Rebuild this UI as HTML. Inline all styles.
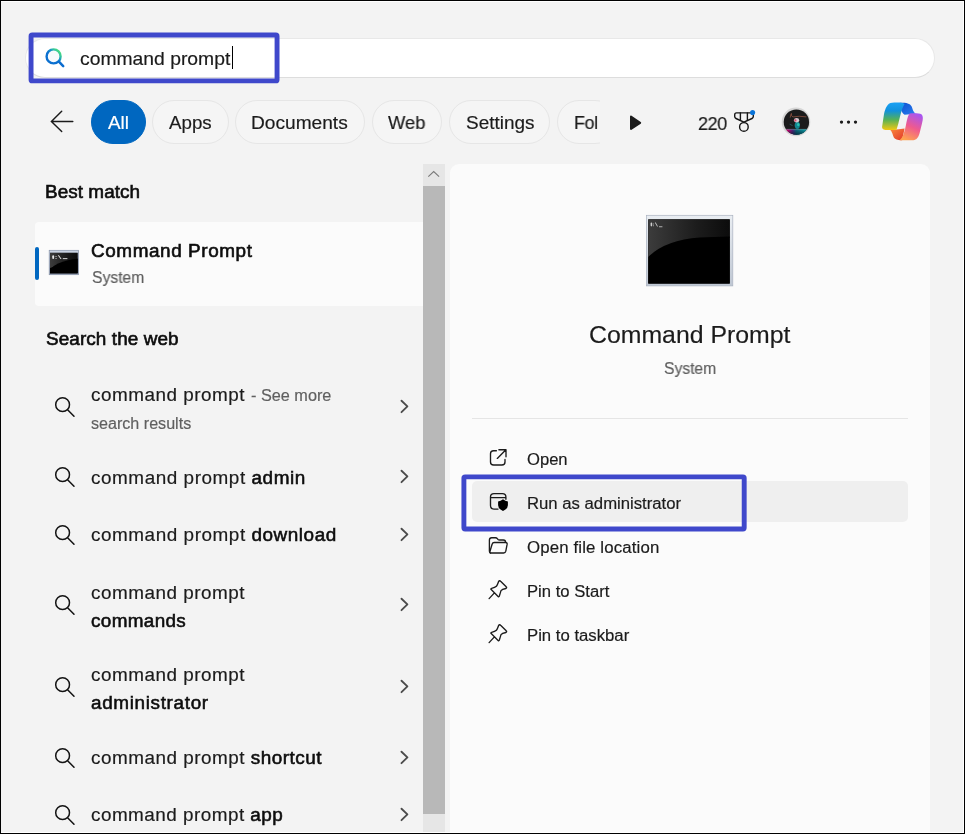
<!DOCTYPE html>
<html>
<head>
<meta charset="utf-8">
<title>Search</title>
<style>
*{box-sizing:border-box;margin:0;padding:0}
html,body{width:965px;height:834px;overflow:hidden;background:#f3f3f3}
body{font-family:"Liberation Sans",sans-serif;color:#1b1b1b;position:relative}
.abs{position:absolute}
svg{position:absolute;overflow:visible}
.t{position:absolute;white-space:nowrap;line-height:1;transform-origin:0 0;will-change:transform;-webkit-text-stroke:0.18px currentColor}
.t b{font-weight:normal;-webkit-text-stroke:0.55px currentColor;color:#0d0d0d}
#frame{left:0;top:0;width:965px;height:834px;border:1px solid #000;z-index:50}
#frame2{left:1px;top:1px;width:963px;height:832px;border-top:1px solid #fff;border-right:1px solid #fff;border-bottom:1px solid #fff;z-index:49}
#search{left:25px;top:38px;width:910px;height:40px;border-radius:20px;background:#fff;border:1px solid #e8e8e8;border-bottom-color:#dddddd}
#caret{left:232px;top:46px;width:1px;height:23px;background:#000}
.pill{position:absolute;top:100px;height:44px;border-radius:22px;border:1px solid #e6e6e6;background:#f5f5f5}
.pill.on{background:#0067c0;border-color:#0067c0}
#best{left:35px;top:222px;width:388px;height:84px;background:#fbfbfb;border-radius:4px 0 0 4px}
#accent{left:35.2px;top:247px;width:3.5px;height:33px;background:#0067c0;border-radius:2px}
#sbtrack{left:423px;top:164px;width:22px;height:668px;background:#e6e6e6}
#sbthumb{left:423px;top:186px;width:22px;height:628px;background:#b8b8b8}
#pane{left:450px;top:164px;width:480px;height:668px;background:#fbfbfb;border-radius:9px 9px 0 0}
#sep{left:472px;top:418px;width:436px;height:1px;background:#e5e5e5}
#rowhl{left:472px;top:481px;width:436px;height:41px;background:#efefef;border-radius:5px}
</style>
</head>
<body>
<div class="abs" id="search"></div>
<div class="abs" id="caret"></div>
<!-- search icon (colour) -->
<svg style="left:0;top:0" width="965" height="834" viewBox="0 0 965 834">
<defs>
<linearGradient id="sg" x1="0.95" y1="0.12" x2="0.3" y2="0.75"><stop offset="0" stop-color="#4ade7a"/><stop offset="0.22" stop-color="#38c99a"/><stop offset="0.5" stop-color="#1590c8"/><stop offset="0.75" stop-color="#0b70d0"/></linearGradient>
</defs>
<g fill="none" stroke-linecap="round">
<circle cx="53.6" cy="56.4" r="7" stroke="url(#sg)" stroke-width="2.4" fill="#f7fafd"/>
<path d="M58.9 61.7 L63.2 66.2" stroke="#0b6ccf" stroke-width="2.5"/>
</g>
<!-- back arrow -->
<path d="M72.8 121.4H51.6M61.7 111.2 51.4 121.4 61.7 131.4" fill="none" stroke="#1b1b1b" stroke-width="1.45" stroke-linecap="round" stroke-linejoin="miter"/>
</svg>

<div class="pill on" style="left:91px;width:55px"></div>
<div class="pill" style="left:152px;width:77px"></div>
<div class="pill" style="left:235px;width:130px"></div>
<div class="pill" style="left:372px;width:70px"></div>
<div class="pill" style="left:449px;width:101px"></div>
<div class="pill" style="left:557px;width:60px"></div>
<div class="abs" id="folclip" style="left:600px;top:96px;width:26px;height:52px;background:#f3f3f3;z-index:3"></div>

<div class="abs" id="best"></div>
<div class="abs" id="accent"></div>
<div class="abs" id="sbtrack"></div>
<div class="abs" id="sbthumb"></div>

<div class="abs" id="pane"></div>
<div class="abs" id="sep"></div>
<div class="abs" id="rowhl"></div>

<svg style="left:0;top:0;z-index:4" width="965" height="834" viewBox="0 0 965 834">
<defs>
<linearGradient id="cpl" x1="0" y1="0" x2="0" y2="1"><stop offset="0" stop-color="#1aa1f4"/><stop offset="0.3" stop-color="#1191dc"/><stop offset="0.62" stop-color="#55b157"/><stop offset="1" stop-color="#f2c811"/></linearGradient>
<linearGradient id="cpr" x1="0.7" y1="0" x2="0.3" y2="1"><stop offset="0" stop-color="#a855f0"/><stop offset="0.5" stop-color="#ef5a8e"/><stop offset="1" stop-color="#ffa44f"/></linearGradient>
<linearGradient id="cpb" x1="0" y1="0" x2="1" y2="1"><stop offset="0" stop-color="#0c4fd0"/><stop offset="1" stop-color="#2a7ff0"/></linearGradient>
<linearGradient id="cpo" x1="0" y1="0" x2="1" y2="1"><stop offset="0" stop-color="#fb8a3c"/><stop offset="1" stop-color="#e0352b"/></linearGradient>
<linearGradient id="gl" x1="0" y1="0" x2="1" y2="0"><stop offset="0" stop-color="#3c3c3c"/><stop offset="0.6" stop-color="#1c1c1c"/><stop offset="1" stop-color="#0c0c0c"/></linearGradient>
<linearGradient id="fr2" x1="0" y1="0" x2="0" y2="1"><stop offset="0" stop-color="#d3dcea"/><stop offset="0.15" stop-color="#b9c4d6"/><stop offset="1" stop-color="#8e9ab0"/></linearGradient>
<linearGradient id="fr" x1="0" y1="0" x2="0" y2="1"><stop offset="0" stop-color="#e9edf2"/><stop offset="1" stop-color="#bfc7d3"/></linearGradient>
<clipPath id="bigclip"><rect x="648.2" y="219.3" width="81.6" height="64.3"/></clipPath>
<clipPath id="smclip"><rect x="50" y="252.8" width="27.6" height="20.4"/></clipPath>
<clipPath id="avc"><circle cx="796" cy="121.6" r="13.2"/></clipPath>
</defs>
<g fill="none" stroke="#131313" stroke-width="1.5" stroke-linecap="round">
<circle cx="62.6" cy="404.70" r="6.9" /><path d="M67.60 409.70L74.00 416.30"/>
<circle cx="62.6" cy="474.70" r="6.9" /><path d="M67.60 479.70L74.00 486.30"/>
<circle cx="62.6" cy="532.70" r="6.9" /><path d="M67.60 537.70L74.00 544.30"/>
<circle cx="62.6" cy="602.70" r="6.9" /><path d="M67.60 607.70L74.00 614.30"/>
<circle cx="62.6" cy="684.70" r="6.9" /><path d="M67.60 689.70L74.00 696.30"/>
<circle cx="62.6" cy="755.70" r="6.9" /><path d="M67.60 760.70L74.00 767.30"/>
<circle cx="62.6" cy="812.70" r="6.9" /><path d="M67.60 817.70L74.00 824.30"/>
</g>
<g fill="none" stroke="#4b4b4b" stroke-width="1.85" stroke-linecap="round" stroke-linejoin="round">
<path d="M401.5 400.75L407.4 406.45L401.5 412.15"/>
<path d="M401.5 470.75L407.4 476.45L401.5 482.15"/>
<path d="M401.5 528.75L407.4 534.45L401.5 540.15"/>
<path d="M401.5 598.75L407.4 604.45L401.5 610.15"/>
<path d="M401.5 680.75L407.4 686.45L401.5 692.15"/>
<path d="M401.5 751.75L407.4 757.45L401.5 763.15"/>
<path d="M401.5 808.75L407.4 814.45L401.5 820.15"/>
</g>
<path d="M428.3 176.7L433.7 171.5L439.1 176.7" fill="none" stroke="#7a7a7a" stroke-width="1.1"/>
<path d="M631 116.6L640.2 122.8L631 129z" fill="#1b1b1b" stroke="#1b1b1b" stroke-width="2" stroke-linejoin="round"/>
<g fill="none" stroke="#161616" stroke-width="1.4" stroke-linejoin="round" stroke-linecap="round"><path d="M736.5 112.9H751.5Q753.3 112.9 753.3 114.7V116.5Q753.3 117.9 752 118.5L743.9 122.1L736 118.5Q734.7 117.9 734.7 116.5V114.7Q734.7 112.9 736.5 112.9Z"/><path d="M740.4 113V120.4M747.4 113V120.4"/><circle cx="743.9" cy="126.9" r="4.3"/></g>
<circle cx="752.6" cy="112.5" r="2.55" fill="#0a74d9"/>
<defs><linearGradient id="avb" x1="0" y1="0" x2="1" y2="0"><stop offset="0.16" stop-color="#e8007c"/><stop offset="0.36" stop-color="#4f2a86"/><stop offset="0.5" stop-color="#0b6f86"/><stop offset="0.75" stop-color="#0d9aa8"/><stop offset="1" stop-color="#22bccb"/></linearGradient><linearGradient id="avd" x1="0" y1="0" x2="0" y2="1"><stop offset="0" stop-color="#000" stop-opacity="0"/><stop offset="1" stop-color="#001a2a" stop-opacity="0.75"/></linearGradient><clipPath id="avc2"><circle cx="796.4" cy="122.1" r="12.7"/></clipPath></defs><circle cx="796" cy="121.9" r="14.3" fill="#d6d6d6"/><circle cx="796.4" cy="122.1" r="12.7" fill="#1b1b1c"/><g clip-path="url(#avc2)"><rect x="783" y="129.3" width="27" height="6" fill="url(#avb)"/><rect x="783" y="129.3" width="27" height="6" fill="url(#avd)"/><rect x="784" y="128.9" width="25" height="0.7" fill="#7fb8bd" opacity="0.6"/><ellipse cx="797.3" cy="125.3" rx="2.6" ry="3.6" fill="#12848f"/><ellipse cx="798.3" cy="124.6" rx="1.3" ry="1.6" fill="#2fd0b8" opacity="0.8"/><ellipse cx="796.6" cy="120.2" rx="2.6" ry="2.2" fill="#d9c9d0"/><circle cx="795.4" cy="120.4" r="1.1" fill="#e2476a"/><path d="M790.2 117.6Q790.6 114.8 791.4 113.4Q791 116.6 793 116.9Q799 115.6 806.4 116.9" stroke="#8d5140" stroke-width="0.8" fill="none"/><path d="M789.6 124.2L792.6 125.6" stroke="#2a6a70" stroke-width="0.7"/></g>
<g fill="#1b1b1b"><circle cx="841.5" cy="122.1" r="1.65"/><circle cx="848.5" cy="122.1" r="1.65"/><circle cx="855.5" cy="122.1" r="1.65"/></g>
<path d="M899.61 102.81 C907.07 102.19 910.80 103.68 912.04 107.41 C912.79 109.90 913.54 112.38 915.77 113.63 L904.58 114.87 C900.85 112.38 900.23 107.41 899.61 102.81 Z" fill="url(#cpb)"/>
<path d="M889.66 129.54 C892.15 131.03 892.77 135.39 894.01 137.87 C895.26 139.74 898.36 140.48 902.10 140.24 L904.58 128.55 C899.61 129.54 894.63 129.79 889.66 129.54 Z" fill="url(#cpo)"/>
<path d="M892.15 102.68 C887.17 102.93 885.31 108.65 884.06 113.63 L882.20 126.06 C881.58 128.80 883.44 130.04 886.55 130.04 C889.66 130.04 893.39 130.04 896.50 129.79 L898.36 123.57 C899.61 118.60 901.47 108.65 904.58 103.93 C902.72 102.43 897.12 102.43 892.15 102.68 Z" fill="url(#cpl)"/>
<path d="M909.56 113.38 C914.53 113.13 919.50 113.13 921.37 114.37 C923.48 116.11 922.99 119.84 921.99 123.57 L919.50 133.52 C917.64 139.12 915.77 140.24 912.04 140.24 L899.61 140.24 C902.72 137.87 903.96 133.52 905.20 128.55 C906.45 123.57 907.07 116.73 909.56 113.38 Z" fill="url(#cpr)"/>
<rect x="49.2" y="250.3" width="29.4" height="24.4" fill="url(#fr2)" stroke="#8591a6" stroke-width="0.7"/><rect x="50" y="252.8" width="27.6" height="20.4" fill="#000"/><g clip-path="url(#smclip)"><ellipse cx="78" cy="270" rx="32" ry="11.5" fill="#000"/><path d="M50 252.8H77.6V259L50 268Z" fill="url(#gl)"/><ellipse cx="80" cy="274" rx="31" ry="15" fill="#000"/></g><g fill="#e8e8e8"><rect x="52.3" y="255.3" width="1.8" height="3.6" rx="0.9"/><rect x="55.6" y="256" width="0.9" height="0.9"/><rect x="55.6" y="258" width="0.9" height="0.9"/><path d="M57.8 255.2L58.9 255.2L61.6 258.9L60.5 258.9Z"/><rect x="62.8" y="258.2" width="4.6" height="0.9"/></g>
<rect x="646.4" y="215.3" width="86.4" height="70.6" fill="url(#fr)" stroke="#a9b1bf" stroke-width="0.7"/><rect x="648.2" y="219.3" width="81.6" height="64.3" fill="#000"/><g clip-path="url(#bigclip)"><path d="M648.2 219.3H729.8V238Q690 234 648.2 257Z" fill="url(#gl)"/><path d="M648.2 257Q665 240 700 237.5L729.8 236.5V284H648.2Z" fill="#000"/></g><g fill="#cfcfcf"><rect x="650.6" y="222.6" width="1.6" height="3.8" rx="0.8"/><rect x="653" y="223.6" width="0.8" height="0.8"/><rect x="653" y="225.4" width="0.8" height="0.8"/><path d="M654.8 222.6L655.7 222.6L658 226.6L657.1 226.6Z"/><rect x="659" y="226.4" width="3.4" height="0.8"/></g>
<g fill="none" stroke="#1b1b1b" stroke-width="1.35" stroke-linecap="round" stroke-linejoin="round">
<path d="M496.4 450.7H493.6Q490.5 450.7 490.5 453.8V461.9Q490.5 465 493.6 465H501.9Q505 465 505 461.9V459.4"/><path d="M497.3 458.4L505.9 449.8M498.9 449.7H506V456.8"/>
<path d="M498 509.1H494Q490.5 509.1 490.5 505.6V497.1Q490.5 493.6 494 493.6H502.4Q505.9 493.6 505.9 497.1V499.2M490.5 497.6H505.9"/>
<path d="M490.4 553H503.6Q505.4 553 505.8 551.2L507.1 544.4Q507.4 542.5 505.6 542.5H494.2Q492.6 542.5 492.1 544.2L490 551.2"/><path d="M490.4 553Q489.4 552.6 489.4 551V540Q489.4 537.7 491.7 537.7H495.4Q496.6 537.7 497.4 538.7L498 539.4Q498.6 540 499.6 540H503.4Q505.6 540 505.6 542.3"/>
<path d="M500.60 581.25L506.20 586.85Q507.20 587.80 505.90 588.50Q502.00 589.30 501.00 590.60Q500.30 593.00 499.35 596.00Q498.90 597.20 498.10 596.40L491.20 589.60Q490.30 588.70 491.60 588.30Q495.00 587.70 496.40 586.30Q497.60 584.60 498.60 581.50Q499.60 580.20 500.60 581.25ZM494.40 592.90L489.10 598.60"/>
<path d="M500.60 625.25L506.20 630.85Q507.20 631.80 505.90 632.50Q502.00 633.30 501.00 634.60Q500.30 637.00 499.35 640.00Q498.90 641.20 498.10 640.40L491.20 633.60Q490.30 632.70 491.60 632.30Q495.00 631.70 496.40 630.30Q497.60 628.60 498.60 625.50Q499.60 624.20 500.60 625.25ZM494.40 636.90L489.10 642.60"/>
</g>
<path d="M503 499.2Q505.3 501.3 507.9 501.4V505.2Q507.9 509 503 510.9Q498.1 509 498.1 505.2V501.4Q500.7 501.3 503 499.2Z" fill="#000"/>
</svg>

<div class="t" id="s_q" style="left:79.8px;top:50px;font-size:18.6px;letter-spacing:0.000px;transform:scaleX(1.0388);">command prompt</div>
<div class="t" id="t_all" style="left:108.0px;top:114px;font-size:18.7px;letter-spacing:0.000px;transform:scaleX(1.0105);color:#fff;">All</div>
<div class="t" id="t_apps" style="left:168.6px;top:114px;font-size:18.7px;letter-spacing:0.000px;transform:scaleX(1.0021);">Apps</div>
<div class="t" id="t_docs" style="left:251.3px;top:114px;font-size:18.7px;letter-spacing:-0.000px;transform:scaleX(1.0231);">Documents</div>
<div class="t" id="t_web" style="left:388.2px;top:114px;font-size:18.7px;letter-spacing:0.000px;transform:scaleX(0.9818);">Web</div>
<div class="t" id="t_set" style="left:465.7px;top:114px;font-size:18.7px;letter-spacing:0.000px;transform:scaleX(1.0143);">Settings</div>
<div class="t" id="t_fol" style="left:573.9px;top:114px;font-size:18.7px;letter-spacing:-0.432px;transform:scaleX(0.9600);">Fol</div>
<div class="t" id="t_220" style="left:697.7px;top:115px;font-size:18.8px;letter-spacing:-0.464px;transform:scaleX(0.9600);">220</div>
<div class="t" id="h_best" style="left:45.1px;top:183px;font-size:18px;letter-spacing:0.058px;transform:scaleX(1.0500);-webkit-text-stroke:0.6px currentColor;color:#0d0d0d;">Best match</div>
<div class="t" id="b_cp" style="left:91.4px;top:242px;font-size:18px;letter-spacing:0.552px;transform:scaleX(1.0500);-webkit-text-stroke:0.6px currentColor;color:#0d0d0d;">Command Prompt</div>
<div class="t" id="b_sys" style="left:91.6px;top:270px;font-size:16px;letter-spacing:0.000px;transform:scaleX(0.9804);color:#5f5f5f;">System</div>
<div class="t" id="h_web" style="left:45.8px;top:330px;font-size:18px;letter-spacing:0.093px;transform:scaleX(1.0500);-webkit-text-stroke:0.6px currentColor;color:#0d0d0d;">Search the web</div>
<div class="t" id="r1a" style="left:90.6px;top:386px;font-size:18px;letter-spacing:0.479px;transform:scaleX(1.0500);">command prompt</div>
<div class="t" id="r1c" style="left:250.9px;top:388px;font-size:16px;letter-spacing:0.000px;transform:scaleX(1.0159);color:#5f5f5f;">- See more</div>
<div class="t" id="r1b" style="left:90.6px;top:416px;font-size:16px;letter-spacing:0.000px;transform:scaleX(1.0061);color:#5f5f5f;">search results</div>
<div class="t" id="r2" style="left:90.6px;top:469px;font-size:18px;letter-spacing:0.521px;transform:scaleX(1.0500);">command prompt <b>admin</b></div>
<div class="t" id="r3" style="left:90.6px;top:526px;font-size:18px;letter-spacing:0.518px;transform:scaleX(1.0500);">command prompt <b>download</b></div>
<div class="t" id="r4a" style="left:90.6px;top:584px;font-size:18px;letter-spacing:0.479px;transform:scaleX(1.0500);">command prompt</div>
<div class="t" id="r4b" style="left:90.6px;top:612px;font-size:18px;letter-spacing:0.322px;transform:scaleX(1.0500);"><b>commands</b></div>
<div class="t" id="r5a" style="left:90.6px;top:666px;font-size:18px;letter-spacing:0.479px;transform:scaleX(1.0500);">command prompt</div>
<div class="t" id="r5b" style="left:90.6px;top:694px;font-size:18px;letter-spacing:0.623px;transform:scaleX(1.0500);"><b>administrator</b></div>
<div class="t" id="r6" style="left:90.6px;top:749px;font-size:18px;letter-spacing:0.478px;transform:scaleX(1.0500);">command prompt <b>shortcut</b></div>
<div class="t" id="r7" style="left:90.6px;top:806px;font-size:18px;letter-spacing:0.445px;transform:scaleX(1.0500);">command prompt <b>app</b></div>
<div class="t" id="p_title" style="left:588.6px;top:323px;font-size:24.8px;letter-spacing:-0.000px;transform:scaleX(1.0010);">Command Prompt</div>
<div class="t" id="p_sys" style="left:663.8px;top:361px;font-size:16px;letter-spacing:0.000px;transform:scaleX(0.9786);color:#5f5f5f;">System</div>
<div class="t" id="a1" style="left:526.9px;top:452px;font-size:16px;letter-spacing:0.000px;transform:scaleX(1.0373);">Open</div>
<div class="t" id="a2" style="left:526.9px;top:496px;font-size:16px;letter-spacing:0.000px;transform:scaleX(1.0439);">Run as administrator</div>
<div class="t" id="a3" style="left:526.9px;top:540px;font-size:16px;letter-spacing:0.139px;transform:scaleX(1.0500);">Open file location</div>
<div class="t" id="a4" style="left:526.9px;top:584px;font-size:16px;letter-spacing:0.000px;transform:scaleX(1.0397);">Pin to Start</div>
<div class="t" id="a5" style="left:526.9px;top:628px;font-size:16px;letter-spacing:0.000px;transform:scaleX(1.0447);">Pin to taskbar</div>

<svg style="left:0;top:0;z-index:6" width="965" height="834" viewBox="0 0 965 834"><g fill="none" stroke="#3f48cb" stroke-width="4.9">
<rect x="31.05" y="35.05" width="246" height="45.8" rx="1.2"/>
<rect x="463.9" y="476.9" width="280.3" height="52.1" rx="1.2"/>
</g></svg>
<div class="abs" id="frame2"></div>
<div class="abs" id="frame"></div>
</body>
</html>
